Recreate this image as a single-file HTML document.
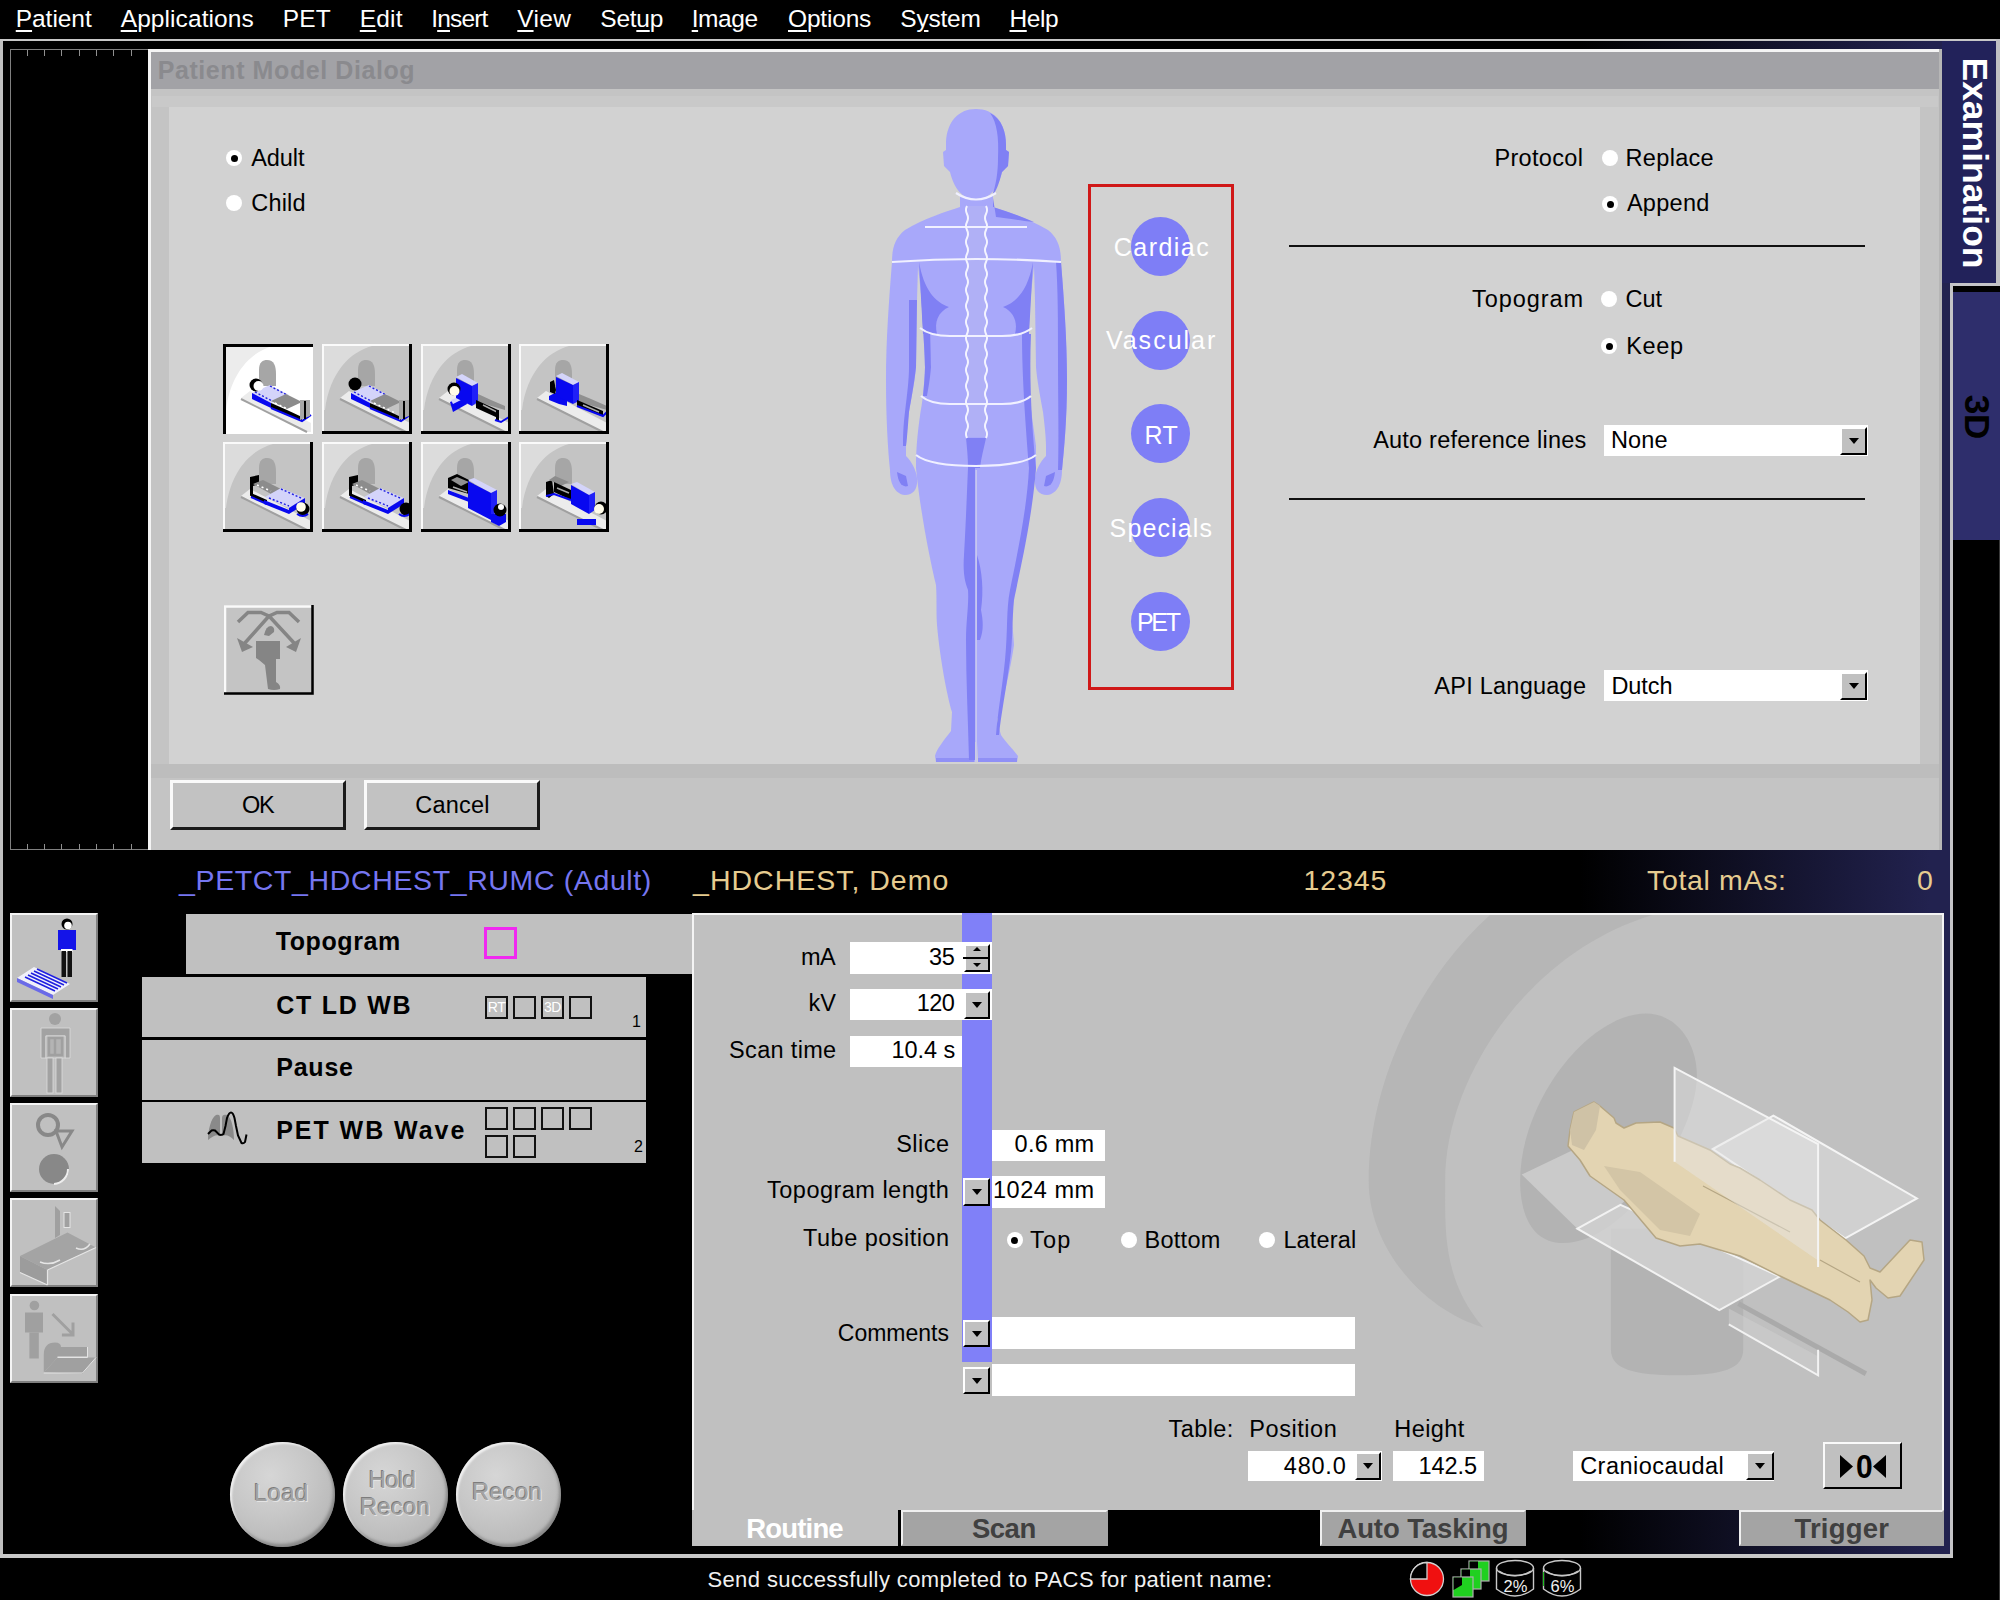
<!DOCTYPE html><html><head><meta charset="utf-8"><style>
html,body{margin:0;padding:0;background:#000;}
body{width:2000px;height:1600px;position:relative;overflow:hidden;font-family:"Liberation Sans", sans-serif;}
u{text-decoration:underline;text-underline-offset:3px;text-decoration-thickness:2px;}
</style></head><body>
<div style="position:absolute;left:0;top:41px;width:1950px;height:1513px;background:linear-gradient(90deg,#000 0,#000 1580px,#22224f 1930px,#22224f 1950px)"></div>
<div style="position:absolute;left:0px;top:39px;width:2000px;height:2px;background:#c8c8c8;"></div>
<div style="position:absolute;left:0px;top:41px;width:3px;height:1517px;background:#c0c0c0;"></div>
<div style="position:absolute;left:15.75px;top:7.26px;font-size:24.5px;line-height:24.5px;letter-spacing:-0.050px;color:#fff;font-weight:normal;white-space:nowrap;"><u>P</u>atient</div>
<div style="position:absolute;left:120.70px;top:7.26px;font-size:24.5px;line-height:24.5px;letter-spacing:0.089px;color:#fff;font-weight:normal;white-space:nowrap;"><u>A</u>pplications</div>
<div style="position:absolute;left:282.80px;top:7.26px;font-size:24.5px;line-height:24.5px;letter-spacing:0.188px;color:#fff;font-weight:normal;white-space:nowrap;">PET</div>
<div style="position:absolute;left:359.80px;top:7.26px;font-size:24.5px;line-height:24.5px;letter-spacing:0.150px;color:#fff;font-weight:normal;white-space:nowrap;"><u>E</u>dit</div>
<div style="position:absolute;left:431.20px;top:7.26px;font-size:24.5px;line-height:24.5px;letter-spacing:-0.830px;color:#fff;font-weight:normal;white-space:nowrap;">I<u>n</u>sert</div>
<div style="position:absolute;left:517.30px;top:7.26px;font-size:24.5px;line-height:24.5px;letter-spacing:0.342px;color:#fff;font-weight:normal;white-space:nowrap;"><u>V</u>iew</div>
<div style="position:absolute;left:600.30px;top:7.26px;font-size:24.5px;line-height:24.5px;letter-spacing:-0.250px;color:#fff;font-weight:normal;white-space:nowrap;">Set<u>u</u>p</div>
<div style="position:absolute;left:691.70px;top:7.26px;font-size:24.5px;line-height:24.5px;letter-spacing:-0.406px;color:#fff;font-weight:normal;white-space:nowrap;"><u>I</u>mage</div>
<div style="position:absolute;left:788.00px;top:7.26px;font-size:24.5px;line-height:24.5px;letter-spacing:-0.179px;color:#fff;font-weight:normal;white-space:nowrap;"><u>O</u>ptions</div>
<div style="position:absolute;left:900.30px;top:7.26px;font-size:24.5px;line-height:24.5px;letter-spacing:-0.225px;color:#fff;font-weight:normal;white-space:nowrap;">S<u>y</u>stem</div>
<div style="position:absolute;left:1009.50px;top:7.26px;font-size:24.5px;line-height:24.5px;letter-spacing:-0.458px;color:#fff;font-weight:normal;white-space:nowrap;"><u>H</u>elp</div>
<div style="position:absolute;left:10px;top:49px;width:140px;height:801px;box-sizing:border-box;border:1px solid #808080;border-right:none;"></div>
<div style="position:absolute;left:27px;top:50px;width:1px;height:6px;background:#909090;"></div>
<div style="position:absolute;left:27px;top:844px;width:1px;height:6px;background:#909090;"></div>
<div style="position:absolute;left:44px;top:50px;width:1px;height:6px;background:#909090;"></div>
<div style="position:absolute;left:44px;top:844px;width:1px;height:6px;background:#909090;"></div>
<div style="position:absolute;left:61px;top:50px;width:1px;height:6px;background:#909090;"></div>
<div style="position:absolute;left:61px;top:844px;width:1px;height:6px;background:#909090;"></div>
<div style="position:absolute;left:79px;top:50px;width:1px;height:6px;background:#909090;"></div>
<div style="position:absolute;left:79px;top:844px;width:1px;height:6px;background:#909090;"></div>
<div style="position:absolute;left:96px;top:50px;width:1px;height:6px;background:#909090;"></div>
<div style="position:absolute;left:96px;top:844px;width:1px;height:6px;background:#909090;"></div>
<div style="position:absolute;left:113px;top:50px;width:1px;height:6px;background:#909090;"></div>
<div style="position:absolute;left:113px;top:844px;width:1px;height:6px;background:#909090;"></div>
<div style="position:absolute;left:131px;top:50px;width:1px;height:6px;background:#909090;"></div>
<div style="position:absolute;left:131px;top:844px;width:1px;height:6px;background:#909090;"></div>
<div style="position:absolute;left:148px;top:49px;width:1794px;height:801px;background:#c4c4c4;"></div>
<div style="position:absolute;left:148px;top:49px;width:1794px;height:3px;background:#f4f4f4;"></div>
<div style="position:absolute;left:148px;top:49px;width:3px;height:801px;background:#f4f4f4;"></div>
<div style="position:absolute;left:1939px;top:49px;width:3px;height:801px;background:#b6b6b6;"></div>
<div style="position:absolute;left:151px;top:52px;width:1788px;height:37px;background:#a2a2a6;"></div>
<div style="position:absolute;left:157.70px;top:58.24px;font-size:25px;line-height:25px;letter-spacing:0.580px;color:#8a8a8e;font-weight:bold;white-space:nowrap;">Patient Model Dialog</div>
<div style="position:absolute;left:151px;top:89px;width:1788px;height:18px;background:#c4c4c4;"></div>
<div style="position:absolute;left:152px;top:96px;width:1786px;height:11px;background:#c9c9c9;"></div>
<div style="position:absolute;left:169px;top:107px;width:1751px;height:657px;background:#d2d2d2;"></div>
<div style="position:absolute;left:151px;top:764px;width:1788px;height:14px;background:#bdbdbd;"></div>
<div style="position:absolute;left:226px;top:150px;width:16px;height:16px;border-radius:50%;background:#fff;"></div>
<div style="position:absolute;left:230.5px;top:154.5px;width:7px;height:7px;border-radius:50%;background:#000;"></div>
<div style="position:absolute;left:251.30px;top:147.11px;font-size:23.5px;line-height:23.5px;letter-spacing:-0.106px;color:#000;font-weight:normal;white-space:nowrap;">Adult</div>
<div style="position:absolute;left:226px;top:195px;width:16px;height:16px;border-radius:50%;background:#fff;"></div>
<div style="position:absolute;left:251.30px;top:192.11px;font-size:23.5px;line-height:23.5px;letter-spacing:0.175px;color:#000;font-weight:normal;white-space:nowrap;">Child</div>
<div style="position:absolute;left:170px;top:780px;width:176px;height:50px;background:#c2c2c2;box-sizing:border-box;border-top:3px solid #fafafa;border-left:3px solid #fafafa;border-bottom:3px solid #1a1a1a;border-right:3px solid #1a1a1a;"></div>
<div style="position:absolute;left:242.00px;top:794.11px;font-size:23.5px;line-height:23.5px;letter-spacing:-1.200px;color:#000;font-weight:normal;white-space:nowrap;">OK</div>
<div style="position:absolute;left:364px;top:780px;width:176px;height:50px;background:#c2c2c2;box-sizing:border-box;border-top:3px solid #fafafa;border-left:3px solid #fafafa;border-bottom:3px solid #1a1a1a;border-right:3px solid #1a1a1a;"></div>
<div style="position:absolute;left:415.20px;top:794.11px;font-size:23.5px;line-height:23.5px;letter-spacing:0.235px;color:#000;font-weight:normal;white-space:nowrap;">Cancel</div>
<div style="position:absolute;left:1494.40px;top:146.61px;font-size:23.5px;line-height:23.5px;letter-spacing:0.336px;color:#000;font-weight:normal;white-space:nowrap;">Protocol</div>
<div style="position:absolute;left:1602px;top:150px;width:16px;height:16px;border-radius:50%;background:#fff;"></div>
<div style="position:absolute;left:1625.60px;top:146.61px;font-size:23.5px;line-height:23.5px;letter-spacing:0.308px;color:#000;font-weight:normal;white-space:nowrap;">Replace</div>
<div style="position:absolute;left:1602px;top:196px;width:16px;height:16px;border-radius:50%;background:#fff;"></div>
<div style="position:absolute;left:1606.5px;top:200.5px;width:7px;height:7px;border-radius:50%;background:#000;"></div>
<div style="position:absolute;left:1626.90px;top:192.11px;font-size:23.5px;line-height:23.5px;letter-spacing:0.300px;color:#000;font-weight:normal;white-space:nowrap;">Append</div>
<div style="position:absolute;left:1289px;top:245px;width:576px;height:2px;background:#111;"></div>
<div style="position:absolute;left:1472.00px;top:287.91px;font-size:23.5px;line-height:23.5px;letter-spacing:0.929px;color:#000;font-weight:normal;white-space:nowrap;">Topogram</div>
<div style="position:absolute;left:1601px;top:291px;width:16px;height:16px;border-radius:50%;background:#fff;"></div>
<div style="position:absolute;left:1625.60px;top:287.91px;font-size:23.5px;line-height:23.5px;letter-spacing:-0.012px;color:#000;font-weight:normal;white-space:nowrap;">Cut</div>
<div style="position:absolute;left:1601px;top:338px;width:16px;height:16px;border-radius:50%;background:#fff;"></div>
<div style="position:absolute;left:1605.5px;top:342.5px;width:7px;height:7px;border-radius:50%;background:#000;"></div>
<div style="position:absolute;left:1626.20px;top:334.71px;font-size:23.5px;line-height:23.5px;letter-spacing:0.708px;color:#000;font-weight:normal;white-space:nowrap;">Keep</div>
<div style="position:absolute;left:1373.20px;top:428.71px;font-size:23.5px;line-height:23.5px;letter-spacing:0.211px;color:#000;font-weight:normal;white-space:nowrap;">Auto reference lines</div>
<div style="position:absolute;left:1604px;top:425px;width:264px;height:31px;background:#fff;"></div>
<div style="position:absolute;left:1611.00px;top:429.11px;font-size:23.5px;line-height:23.5px;letter-spacing:0.125px;color:#000;font-weight:normal;white-space:nowrap;">None</div>
<div style="position:absolute;left:1840px;top:427px;width:27px;height:28px;background:#c0c0c0;box-sizing:border-box;border-top:2px solid #fff;border-left:2px solid #fff;border-bottom:2px solid #000;border-right:2px solid #000;"></div>
<svg style="position:absolute;left:1847.5px;top:437.0px" width="12" height="8"><polygon points="1,1 11,1 6,7" fill="#000"/></svg>
<div style="position:absolute;left:1289px;top:498px;width:576px;height:2px;background:#111;"></div>
<div style="position:absolute;left:1434.30px;top:674.61px;font-size:23.5px;line-height:23.5px;letter-spacing:0.245px;color:#000;font-weight:normal;white-space:nowrap;">API Language</div>
<div style="position:absolute;left:1604px;top:670px;width:264px;height:31px;background:#fff;"></div>
<div style="position:absolute;left:1611.40px;top:674.61px;font-size:23.5px;line-height:23.5px;letter-spacing:-0.069px;color:#000;font-weight:normal;white-space:nowrap;">Dutch</div>
<div style="position:absolute;left:1840px;top:672px;width:27px;height:28px;background:#c0c0c0;box-sizing:border-box;border-top:2px solid #fff;border-left:2px solid #fff;border-bottom:2px solid #000;border-right:2px solid #000;"></div>
<svg style="position:absolute;left:1847.5px;top:682.0px" width="12" height="8"><polygon points="1,1 11,1 6,7" fill="#000"/></svg>
<div style="position:absolute;left:1088px;top:184px;width:146px;height:506px;box-sizing:border-box;border:3px solid #d01818;"></div>
<div style="position:absolute;left:1131.0px;top:217.1px;width:59px;height:59px;border-radius:50%;background:#7e7ef6;"></div>
<div style="position:absolute;left:1113.80px;top:234.74px;font-size:25px;line-height:25px;letter-spacing:1.463px;color:#fff;font-weight:normal;white-space:nowrap;">Cardiac</div>
<div style="position:absolute;left:1131.0px;top:310.5px;width:59px;height:59px;border-radius:50%;background:#7e7ef6;"></div>
<div style="position:absolute;left:1105.90px;top:328.34px;font-size:25px;line-height:25px;letter-spacing:2.004px;color:#fff;font-weight:normal;white-space:nowrap;">Vascular</div>
<div style="position:absolute;left:1131.0px;top:404.2px;width:59px;height:59px;border-radius:50%;background:#7e7ef6;"></div>
<div style="position:absolute;left:1144.60px;top:422.74px;font-size:25px;line-height:25px;letter-spacing:0.425px;color:#fff;font-weight:normal;white-space:nowrap;">RT</div>
<div style="position:absolute;left:1131.0px;top:498.0px;width:59px;height:59px;border-radius:50%;background:#7e7ef6;"></div>
<div style="position:absolute;left:1109.60px;top:516.14px;font-size:25px;line-height:25px;letter-spacing:1.129px;color:#fff;font-weight:normal;white-space:nowrap;">Specials</div>
<div style="position:absolute;left:1131.0px;top:591.5px;width:59px;height:59px;border-radius:50%;background:#7e7ef6;"></div>
<div style="position:absolute;left:1136.90px;top:610.44px;font-size:25px;line-height:25px;letter-spacing:-2.213px;color:#fff;font-weight:normal;white-space:nowrap;">PET</div>
<svg style="position:absolute;left:223px;top:344px" width="90" height="90"><rect x="0" y="0" width="90" height="90" fill="#ffffff"/><path d="M2,2 H50 C28,8 8,28 3,66 L2,66 Z" fill="#ececec"/><path d="M36,42 V26 C36,18 40,16 44,16 C51,16 53,22 53,30 V42 Z" fill="#a6a6a6"/><polygon points="18,54 27,47 88,79 88,88 84,88" fill="#ececec" /><path d="M18,55 L84,88" stroke="#a0a0a0" stroke-width="2"/><polygon points="29,49 47,41 66,51 48,59" fill="#d4d4fa" /><path d="M32,48 L49,57 M47,42 L64,51" stroke="#2020e0" stroke-width="1.4" stroke-dasharray="2,2"/><polygon points="29,49 48,59 48,64 29,55" fill="#0808f0" /><polygon points="48,57 63,50 79,58 64,65" fill="#8c8c8c" /><path d="M52,59 L73,69" stroke="#fff" stroke-width="1.5" stroke-dasharray="2,3"/><polygon points="48,59 64,66 79,73 79,77 48,64" fill="#000" /><path d="M48,64 L79,77 L88,71" stroke="#0808f0" stroke-width="2" fill="none"/><polygon points="77,56 87,56 87,72 77,76" fill="#a8a8a8" /><path d="M82,57 V75" stroke="#000" stroke-width="2"/><circle cx="33" cy="41" r="6.5" fill="#000"/><circle cx="35.5" cy="42" r="5" fill="#fff"/><path d="M1.5,90 V1.5 H90" fill="none" stroke="#000" stroke-width="3"/></svg>
<svg style="position:absolute;left:322px;top:344px" width="90" height="90"><rect x="0" y="0" width="90" height="90" fill="#c4c4c4"/><path d="M2,2 H50 C28,8 8,28 3,66 L2,66 Z" fill="#dcdcdc"/><path d="M36,42 V26 C36,18 40,16 44,16 C51,16 53,22 53,30 V42 Z" fill="#a6a6a6"/><polygon points="18,54 27,47 88,79 88,88 84,88" fill="#ececec" /><path d="M18,55 L84,88" stroke="#a0a0a0" stroke-width="2"/><polygon points="29,49 47,41 66,51 48,59" fill="#d4d4fa" /><path d="M32,48 L49,57 M47,42 L64,51" stroke="#2020e0" stroke-width="1.4" stroke-dasharray="2,2"/><polygon points="29,49 48,59 48,64 29,55" fill="#0808f0" /><polygon points="48,57 63,50 79,58 64,65" fill="#8c8c8c" /><path d="M52,59 L73,69" stroke="#fff" stroke-width="1.5" stroke-dasharray="2,3"/><polygon points="48,59 64,66 79,73 79,77 48,64" fill="#000" /><path d="M48,64 L79,77 L88,71" stroke="#0808f0" stroke-width="2" fill="none"/><polygon points="77,56 87,56 87,72 77,76" fill="#a8a8a8" /><path d="M82,57 V75" stroke="#000" stroke-width="2"/><circle cx="33" cy="40" r="6.5" fill="#000"/><path d="M1,89 V1 H89" fill="none" stroke="#fafafa" stroke-width="2"/><path d="M0,88.5 H88.5 V0" fill="none" stroke="#000" stroke-width="3"/></svg>
<svg style="position:absolute;left:421px;top:344px" width="90" height="90"><rect x="0" y="0" width="90" height="90" fill="#c4c4c4"/><path d="M2,2 H50 C28,8 8,28 3,66 L2,66 Z" fill="#dcdcdc"/><path d="M36,42 V26 C36,18 40,16 44,16 C51,16 53,22 53,30 V42 Z" fill="#a6a6a6"/><polygon points="18,54 27,47 88,79 88,88 84,88" fill="#ececec" /><path d="M18,55 L84,88" stroke="#a0a0a0" stroke-width="2"/><polygon points="29,58 44,52 46,60 32,68" fill="#0808f0" /><polygon points="30,56 42,51 44,54 32,60" fill="#d4d4fa" /><polygon points="35,33 41,30 57,39 51,42" fill="#d4d4fa" /><polygon points="35,34 51,42 51,62 35,54" fill="#0808f0" /><polygon points="51,42 57,39 57,58 51,62" fill="#2020f8" /><polygon points="57,50 70,56 84,62 84,66 57,58" fill="#909090" /><polygon points="55,56 77,66 77,74 55,64" fill="#000" /><path d="M62,61 L76,68" stroke="#aaa" stroke-width="1.5"/><polygon points="75,66 78,66 78,77 75,77" fill="#000" /><path d="M74,76 L80,78 L88,73" stroke="#0808f0" stroke-width="2" fill="none"/><circle cx="33" cy="45" r="6.5" fill="#000"/><circle cx="33.5" cy="47" r="5" fill="#fffbe8"/><path d="M1,89 V1 H89" fill="none" stroke="#fafafa" stroke-width="2"/><path d="M0,88.5 H88.5 V0" fill="none" stroke="#000" stroke-width="3"/></svg>
<svg style="position:absolute;left:519px;top:344px" width="90" height="90"><rect x="0" y="0" width="90" height="90" fill="#c4c4c4"/><path d="M2,2 H50 C28,8 8,28 3,66 L2,66 Z" fill="#dcdcdc"/><path d="M36,42 V26 C36,18 40,16 44,16 C51,16 53,22 53,30 V42 Z" fill="#a6a6a6"/><polygon points="18,54 27,47 88,79 88,88 84,88" fill="#ececec" /><path d="M18,55 L84,88" stroke="#a0a0a0" stroke-width="2"/><polygon points="30,52 38,48 48,54 48,62 40,60 30,56" fill="#0808f0" /><polygon points="37,32 43,29 60,38 54,41" fill="#d4d4fa" /><polygon points="37,33 54,41 54,60 37,52" fill="#0808f0" /><polygon points="54,41 60,38 60,57 54,60" fill="#2020f8" /><polygon points="60,50 72,55 88,62 88,66 60,58" fill="#909090" /><polygon points="58,56 84,67 84,72 58,62" fill="#000" /><path d="M64,61 L80,68" stroke="#aaa" stroke-width="1.5"/><path d="M58,62 L84,72 L88,68" stroke="#0808f0" stroke-width="2" fill="none"/><path d="M31,38 L35,36 L37,46 L36,50 L31,48 Z" fill="#000"/><path d="M1,89 V1 H89" fill="none" stroke="#fafafa" stroke-width="2"/><path d="M0,88.5 H88.5 V0" fill="none" stroke="#000" stroke-width="3"/></svg>
<svg style="position:absolute;left:223px;top:442px" width="90" height="90"><rect x="0" y="0" width="90" height="90" fill="#c4c4c4"/><path d="M2,2 H50 C28,8 8,28 3,66 L2,66 Z" fill="#dcdcdc"/><path d="M36,42 V26 C36,18 40,16 44,16 C51,16 53,22 53,30 V42 Z" fill="#a6a6a6"/><polygon points="18,54 27,47 88,79 88,88 84,88" fill="#ececec" /><path d="M18,55 L84,88" stroke="#a0a0a0" stroke-width="2"/><polygon points="27,35 36,33 36,42 30,44 30,53 27,54" fill="#000" /><polygon points="30,42 40,38 58,47 48,52" fill="#8c8c8c" /><path d="M34,43 L48,49" stroke="#fff" stroke-width="1.5" stroke-dasharray="2,3"/><polygon points="28,51 44,58 44,62 28,55" fill="#000" /><path d="M28,55 L44,62" stroke="#0808f0" stroke-width="2"/><polygon points="42,55 58,46 82,56 66,66" fill="#d4d4fa" /><path d="M46,56 L66,64 M58,47 L78,56" stroke="#2020e0" stroke-width="1.4" stroke-dasharray="2,2"/><polygon points="41,58 66,68 66,72 41,62" fill="#0808f0" /><polygon points="66,66 82,56 82,62 66,72" fill="#0808f0" /><circle cx="80" cy="67" r="6.5" fill="#000"/><circle cx="78" cy="65" r="4.8" fill="#fffbe8"/><path d="M74,72 Q80,76 85,72" stroke="#0808f0" stroke-width="2" fill="none"/><path d="M1,89 V1 H89" fill="none" stroke="#fafafa" stroke-width="2"/><path d="M0,88.5 H88.5 V0" fill="none" stroke="#000" stroke-width="3"/></svg>
<svg style="position:absolute;left:322px;top:442px" width="90" height="90"><rect x="0" y="0" width="90" height="90" fill="#c4c4c4"/><path d="M2,2 H50 C28,8 8,28 3,66 L2,66 Z" fill="#dcdcdc"/><path d="M36,42 V26 C36,18 40,16 44,16 C51,16 53,22 53,30 V42 Z" fill="#a6a6a6"/><polygon points="18,54 27,47 88,79 88,88 84,88" fill="#ececec" /><path d="M18,55 L84,88" stroke="#a0a0a0" stroke-width="2"/><polygon points="27,35 36,33 36,42 30,44 30,53 27,54" fill="#000" /><polygon points="30,42 40,38 58,47 48,52" fill="#8c8c8c" /><path d="M34,43 L48,49" stroke="#fff" stroke-width="1.5" stroke-dasharray="2,3"/><polygon points="28,51 44,58 44,62 28,55" fill="#000" /><path d="M28,55 L44,62" stroke="#0808f0" stroke-width="2"/><polygon points="42,55 58,46 82,56 66,66" fill="#d4d4fa" /><path d="M46,56 L66,64 M58,47 L78,56" stroke="#2020e0" stroke-width="1.4" stroke-dasharray="2,2"/><polygon points="41,58 66,68 66,72 41,62" fill="#0808f0" /><polygon points="66,66 82,56 82,62 66,72" fill="#0808f0" /><circle cx="84" cy="67" r="6.5" fill="#000"/><path d="M77,72 Q82,76 88,72" stroke="#0808f0" stroke-width="2" fill="none"/><path d="M1,89 V1 H89" fill="none" stroke="#fafafa" stroke-width="2"/><path d="M0,88.5 H88.5 V0" fill="none" stroke="#000" stroke-width="3"/></svg>
<svg style="position:absolute;left:421px;top:442px" width="90" height="90"><rect x="0" y="0" width="90" height="90" fill="#c4c4c4"/><path d="M2,2 H50 C28,8 8,28 3,66 L2,66 Z" fill="#dcdcdc"/><path d="M36,42 V26 C36,18 40,16 44,16 C51,16 53,22 53,30 V42 Z" fill="#a6a6a6"/><polygon points="18,54 27,47 88,79 88,88 84,88" fill="#ececec" /><path d="M18,55 L84,88" stroke="#a0a0a0" stroke-width="2"/><polygon points="27,36 36,32 48,38 48,52 27,46" fill="#000" /><polygon points="30,38 36,35 48,40 40,44" fill="#909090" /><path d="M32,45 L46,50" stroke="#aaa" stroke-width="1.5"/><polygon points="27,48 48,56 48,60 27,52" fill="#0808f0" /><polygon points="47,38 53,36 76,48 70,51" fill="#d4d4fa" /><polygon points="47,39 70,51 70,78 47,66" fill="#0808f0" /><polygon points="70,51 76,48 76,70 70,74" fill="#2020f8" /><polygon points="70,72 85,72 85,80 78,84 70,80" fill="#0808f0" /><circle cx="79" cy="68" r="6.5" fill="#000"/><circle cx="80" cy="65" r="3" fill="#fff"/><path d="M1,89 V1 H89" fill="none" stroke="#fafafa" stroke-width="2"/><path d="M0,88.5 H88.5 V0" fill="none" stroke="#000" stroke-width="3"/></svg>
<svg style="position:absolute;left:519px;top:442px" width="90" height="90"><rect x="0" y="0" width="90" height="90" fill="#c4c4c4"/><path d="M2,2 H50 C28,8 8,28 3,66 L2,66 Z" fill="#dcdcdc"/><path d="M36,42 V26 C36,18 40,16 44,16 C51,16 53,22 53,30 V42 Z" fill="#a6a6a6"/><polygon points="18,54 27,47 88,79 88,88 84,88" fill="#ececec" /><path d="M18,55 L84,88" stroke="#a0a0a0" stroke-width="2"/><polygon points="27,40 33,38 35,52 30,56 27,54" fill="#000" /><polygon points="30,38 36,34 50,40 42,44" fill="#8c8c8c" /><polygon points="35,40 52,48 52,58 35,50" fill="#000" /><path d="M38,46 L50,51" stroke="#aaa" stroke-width="1.5"/><path d="M27,54 L35,52 L52,58" stroke="#0808f0" stroke-width="2" fill="none"/><polygon points="52,42 58,40 76,50 70,53" fill="#d4d4fa" /><polygon points="52,43 70,53 70,72 52,62" fill="#0808f0" /><polygon points="70,53 76,50 76,68 70,72" fill="#2020f8" /><rect x="58" y="77" width="19" height="6" fill="#0808f0"/><circle cx="82" cy="66" r="6.5" fill="#000"/><circle cx="80" cy="67" r="5" fill="#fffbe8"/><path d="M1,89 V1 H89" fill="none" stroke="#fafafa" stroke-width="2"/><path d="M0,88.5 H88.5 V0" fill="none" stroke="#000" stroke-width="3"/></svg>
<svg style="position:absolute;left:224px;top:605px" width="90" height="90"><rect width="90" height="90" fill="#c4c4c4"/><path d="M1,89 V1.5 H89" fill="none" stroke="#fafafa" stroke-width="2.5"/><path d="M0,88.5 H88.5 V0" fill="none" stroke="#000" stroke-width="2.5"/><path d="M14,17 L24,7.5 L37,7.5 L45,11 L53,7.5 L65,7.5 L75,17" fill="none" stroke="#858585" stroke-width="3.5"/><path d="M45,11 L20,39 M45,11 L71,39" fill="none" stroke="#858585" stroke-width="3.5"/><polygon points="13,33 18,47 29,42" fill="#858585"/><polygon points="77,33 72,47 62,42" fill="#858585"/><path d="M40,30 Q42,21 47,21 Q51,22 50,27 L45,31 Z" fill="#858585"/><path d="M32,36 H56 V54 H52 V77 Q57,80 56,84 Q50,86 44,84 L41,60 L35,55 L32,53 Z" fill="#858585"/></svg>
<svg style="position:absolute;left:0px;top:0px" width="2000" height="1600"><path fill="#a8a8fa" d="
M960,196 L960,207 C945,212 925,218 905,230 C895,238 892,248 892,262
C889,300 886,340 886,380 C886,420 888,450 890,470 C890,482 894,494 905,495 C914,495 918,488 917,478
C916,470 912,462 906,456 L906,446 C907,430 908,418 909,412 C912,395 915,380 916,367 L917,300 L918,266 L921.6,300 C923,330 925,355 925,367 C924,390 922,405 920.5,412 C918,430 916,446 916,468
C920,510 930,560 936,585 C937,600 936,610 937,625 C940,660 948,700 952,712 L951,731 C944,740 936,750 935,756 L936,762 L975,762 L975,742 L977,742 L978,762
L1017,762 L1018,756 C1012,748 1004,740 1001,735 L997,721 C1004,700 1012,660 1014,645 C1013,625 1010,612 1011,600 C1016,570 1030,510 1036,468
C1036,455 1036,446 1036,446 C1034,430 1032,418 1031.5,412 C1030,405 1027,390 1027,367 C1027,355 1029,330 1030.4,300 L1034,266 L1035,300 L1036,367 C1037,380 1040,395 1043,412 C1044,420 1046,436 1046,446 L1046,456 C1040,462 1036,470 1035,478 C1034,488 1038,495 1047,495 C1058,494 1062,482 1062,470
C1064,450 1067,420 1067,380 C1067,340 1064,300 1061,262 C1061,248 1058,238 1048,230
C1028,218 1008,212 993,207 L993,196 Z"/><path fill="#a8a8fa" d="M976,109 C994,109 1005,122 1006,142 L1006,150 L1009,152 L1008,166 L1002,172 C998,188 990,199 976,200 C962,199 954,188 950,172 L944,166 L943,152 L946,150 L946,142 C947,122 958,109 976,109 Z"/><path fill="#8080f4" d="M990,113 C1002,119 1006,132 1006,145 L1006,150 L1009,152 L1008,166 L1002,172 C999,184 996,192 992,196 C996,185 998,172 998,158 C999,138 997,122 990,113 Z"/><path fill="#8080f4" d="M993,198 L993,207 C1006,211 1020,216 1034,222 C1018,220 1004,218 996,217 Z"/><path fill="#8080f4" d="M919,262 L923,334 L937,334 C934,322 938,312 949,307 C935,302 924,290 919,262 Z"/><path fill="#8080f4" d="M1033,262 L1029,334 L1015,334 C1018,322 1014,312 1003,307 C1017,302 1028,290 1033,262 Z"/><path fill="#8080f4" d="M921.6,300 L929.5,300 C930,330 931,355 931,367 C930,380 928,390 927,396 L923,396 C924,385 925,375 925,367 C925,355 923,330 921.6,300 Z"/><path fill="#8080f4" d="M1022,334 L1031,334 C1029,380 1032,430 1036,468 C1032,520 1020,570 1014,600 C1012,620 1013,640 1010,660 C1006,690 1001,715 999,735 L996,735 C998,710 1002,690 1005,660 C1008,630 1006,610 1010,590 C1016,560 1027,510 1029,468 C1026,430 1022,380 1022,334 Z"/><path fill="#8080f4" d="M1056,262 L1061,262 C1064,300 1067,340 1067,380 C1067,420 1064,450 1062,470 L1058,470 C1059,440 1058,400 1058,360 C1058,320 1058,290 1056,262 Z"/><path fill="#8080f4" d="M909,300 L917,300 L916,367 C914,385 911,400 909,412 C908,425 907,438 906,446 L903,446 C903,430 904,420 905,412 C907,395 909,380 909,367 Z"/><path fill="#8080f4" d="M966,438 L986,438 C984,448 981,458 980,468 L975,468 L975,760 L969,760 C968,720 966,680 966,640 C966,620 969,605 968,590 C964,580 963,570 964,555 C966,520 967,490 968,468 C968,458 967,448 966,438 Z"/><path fill="#8080f4" d="M977,555 C982,570 984,590 981,610 C983,620 984,630 980,640 L977,640 Z"/><path d="M976.2,470 L976.2,762" stroke="#c6c6ee" stroke-width="1.6"/><path fill="#8080f4" d="M897,472 C898,482 902,488 908,486 L906,476 Z"/><path fill="#8080f4" d="M1055,472 C1054,482 1050,488 1044,486 L1046,476 Z"/><path fill="#8080f4" d="M936,758 L974,758 L974,762 L936,762 Z M978,758 L1017,758 L1017,762 L978,762 Z" opacity="0.6"/><path fill="#b0b0f6" d="M968,206 L985,206 L985,437 L968,437 Z"/><path stroke="#f0f0ff" stroke-width="2.2" fill="none" d="M925,227 L1027,227"/><path stroke="#f0f0ff" stroke-width="2.2" fill="none" d="M892,262 Q976,256 1061,262"/><path stroke="#f0f0ff" stroke-width="2.2" fill="none" d="M920,328 Q930,336 950,336 L1002,336 Q1022,336 1032,328"/><path stroke="#f0f0ff" stroke-width="2.2" fill="none" d="M921,396 Q930,404 950,404 L1002,404 Q1022,404 1031,396"/><path stroke="#f0f0ff" stroke-width="2.2" fill="none" d="M916,455 Q930,466 976,466 Q1022,466 1036,455"/><path stroke="#f0f0ff" stroke-width="2.2" fill="none" d="M956,193 Q976,206 996,193"/><path stroke="#f4f4ff" stroke-width="2" fill="none" d="M967,206 Q965,210 967,214 Q969,218 967,222 Q965,226 967,230 Q969,234 967,238 Q965,242 967,246 Q969,250 967,254 Q965,258 967,262 Q969,266 967,270 Q965,274 967,278 Q969,282 967,286 Q965,290 967,294 Q969,298 967,302 Q965,306 967,310 Q969,314 967,318 Q965,322 967,326 Q969,330 967,334 Q965,338 967,342 Q969,346 967,350 Q965,354 967,358 Q969,362 967,366 Q965,370 967,374 Q969,378 967,382 Q965,386 967,390 Q969,394 967,398 Q965,402 967,406 Q969,410 967,414 Q965,418 967,422 Q969,426 967,430 Q965,434 967,438"/><path stroke="#f4f4ff" stroke-width="2" fill="none" d="M986,206 Q988,210 986,214 Q984,218 986,222 Q988,226 986,230 Q984,234 986,238 Q988,242 986,246 Q984,250 986,254 Q988,258 986,262 Q984,266 986,270 Q988,274 986,278 Q984,282 986,286 Q988,290 986,294 Q984,298 986,302 Q988,306 986,310 Q984,314 986,318 Q988,322 986,326 Q984,330 986,334 Q988,338 986,342 Q984,346 986,350 Q988,354 986,358 Q984,362 986,366 Q988,370 986,374 Q984,378 986,382 Q988,386 986,390 Q984,394 986,398 Q988,402 986,406 Q984,410 986,414 Q988,418 986,422 Q984,426 986,430 Q988,434 986,438"/></svg>
<div style="position:absolute;left:179.10px;top:866.18px;font-size:28.5px;line-height:28.5px;letter-spacing:0.622px;color:#7676f0;font-weight:normal;white-space:nowrap;">_PETCT_HDCHEST_RUMC (Adult)</div>
<div style="position:absolute;left:693.10px;top:866.18px;font-size:28.5px;line-height:28.5px;letter-spacing:0.988px;color:#e6cc90;font-weight:normal;white-space:nowrap;">_HDCHEST, Demo</div>
<div style="position:absolute;left:1303.50px;top:866.18px;font-size:28.5px;line-height:28.5px;letter-spacing:0.887px;color:#e6cc90;font-weight:normal;white-space:nowrap;">12345</div>
<div style="position:absolute;left:1647.00px;top:866.18px;font-size:28.5px;line-height:28.5px;letter-spacing:0.667px;color:#e6cc90;font-weight:normal;white-space:nowrap;">Total mAs:</div>
<div style="position:absolute;left:1917.00px;top:866.18px;font-size:28.5px;line-height:28.5px;letter-spacing:0.000px;color:#e6cc90;font-weight:normal;white-space:nowrap;">0</div>
<div style="position:absolute;left:1950px;top:283px;width:3px;height:1275px;background:#c4c4c8;"></div>
<div style="position:absolute;left:1999px;top:540px;width:1px;height:1060px;background:#3a3a3a;"></div>
<div style="position:absolute;left:10px;top:913px;width:88px;height:89px;background:#c0c0c0;box-sizing:border-box;border-top:2px solid #f4f4f4;border-left:2px solid #f4f4f4;border-bottom:2px solid #808080;border-right:2px solid #808080;"></div>
<div style="position:absolute;left:10px;top:1008px;width:88px;height:89px;background:#c0c0c0;box-sizing:border-box;border-top:2px solid #f4f4f4;border-left:2px solid #f4f4f4;border-bottom:2px solid #808080;border-right:2px solid #808080;"></div>
<div style="position:absolute;left:10px;top:1103px;width:88px;height:89px;background:#c0c0c0;box-sizing:border-box;border-top:2px solid #f4f4f4;border-left:2px solid #f4f4f4;border-bottom:2px solid #808080;border-right:2px solid #808080;"></div>
<div style="position:absolute;left:10px;top:1198px;width:88px;height:89px;background:#c0c0c0;box-sizing:border-box;border-top:2px solid #f4f4f4;border-left:2px solid #f4f4f4;border-bottom:2px solid #808080;border-right:2px solid #808080;"></div>
<div style="position:absolute;left:10px;top:1294px;width:88px;height:89px;background:#c0c0c0;box-sizing:border-box;border-top:2px solid #f4f4f4;border-left:2px solid #f4f4f4;border-bottom:2px solid #808080;border-right:2px solid #808080;"></div>
<svg style="position:absolute;left:10px;top:913px" width="88" height="89"><circle cx="57" cy="11" r="5.5" fill="#000"/><circle cx="58" cy="12.5" r="3.8" fill="#fff"/><path d="M48,17 H66 V37 H63 V25 H51 V37 H48 Z" fill="#1414e8"/><rect x="51" y="17" width="12" height="20" fill="#1414e8"/><rect x="51" y="36" width="11.5" height="3" fill="#fff"/><rect x="51.5" y="38" width="4.5" height="26" fill="#111"/><rect x="57.5" y="38" width="4.5" height="26" fill="#111"/><polygon points="7,65 24,54 60,71 43,82" fill="#f0f0fa"/><polygon points="7,65 43,82 43,86 7,69" fill="#6a6ae8"/><path d="M15,64 L45,78 M18,62 L48,76 M21,60 L51,74 M24,58 L54,72 M27,56 L57,70" stroke="#2020e0" stroke-width="1.6"/></svg>
<svg style="position:absolute;left:10px;top:1008px" width="88" height="89"><circle cx="45" cy="11" r="6" fill="#a2a2a2"/><path d="M31,20 H60 V50 H55 V28 H36 V50 H31 Z" fill="#a2a2a2" stroke="#dcdcdc" stroke-width="0.8"/><rect x="36" y="28" width="19" height="22" fill="#b4b4b4" stroke="#dcdcdc" stroke-width="0.8"/><path d="M39,30 H52 V47 H39 Z M45,30 V47" fill="none" stroke="#a0a0a0" stroke-width="2.5"/><rect x="37" y="50" width="6" height="35" fill="#a2a2a2" stroke="#dcdcdc" stroke-width="0.8"/><rect x="46" y="50" width="6" height="35" fill="#a2a2a2" stroke="#dcdcdc" stroke-width="0.8"/></svg>
<svg style="position:absolute;left:10px;top:1103px" width="88" height="89"><circle cx="38" cy="22" r="10" fill="none" stroke="#888" stroke-width="4"/><path d="M46,28 L62,28 L52,44 Z" fill="none" stroke="#888" stroke-width="3"/><circle cx="44" cy="66" r="15" fill="#888"/><path d="M58,66 A15,15 0 0 1 44,81" stroke="#eee" stroke-width="2" fill="none"/></svg>
<svg style="position:absolute;left:10px;top:1198px" width="88" height="89"><path d="M45,8 L50,13 V37 L45,40 Z" fill="#a0a0a0"/><rect x="54" y="14.5" width="6" height="15" fill="#a0a0a0" stroke="#e4e4e4" stroke-width="1"/><polygon points="10,58 57.5,34.5 86,49.5 37.5,72" fill="#a4a4a4"/><polygon points="10,58 37.5,72 37.5,87 10,74.5" fill="#9c9c9c"/><path d="M37.5,72 L86,49.5 M37.5,72 V87 M10,74.5 L37.5,87" stroke="#e6e6e6" stroke-width="1.2" fill="none"/><path d="M30,64 Q40,68 50,62 M66,50 Q74,54 80,46" stroke="#e6e6e6" stroke-width="1.5" fill="none"/></svg>
<svg style="position:absolute;left:10px;top:1294px" width="88" height="89"><circle cx="24.4" cy="11.5" r="4.8" fill="#a0a0a0"/><rect x="15" y="18.5" width="18" height="20" fill="#a0a0a0"/><rect x="19.4" y="38.5" width="9.4" height="26" fill="#a0a0a0"/><path d="M42.5,20 L62,39.5 M63,28.5 V41 H51.9" stroke="#a0a0a0" stroke-width="3" fill="none"/><path d="M33.75,61 Q33.75,48.5 45,48.5 Q51,48.5 51,53 H77.5 V62 H47.5 L47.5,63.5 L33.75,78.5 Z" fill="#a0a0a0"/><polygon points="33.75,78.5 47.5,63.5 86,63.5 72.5,79.75" fill="#a0a0a0"/><path d="M47.5,63.5 H77.5 V53 M33.75,79 H72.5 L86,63.5" stroke="#e4e4e4" stroke-width="1" fill="none"/></svg>
<div style="position:absolute;left:186px;top:914px;width:506px;height:60px;background:#c0c0c0;"></div>
<div style="position:absolute;left:275.70px;top:928.84px;font-size:25px;line-height:25px;letter-spacing:0.589px;color:#000;font-weight:bold;white-space:nowrap;">Topogram</div>
<div style="position:absolute;left:484px;top:927px;width:33px;height:32px;box-sizing:border-box;border:3px solid #f028f0;"></div>
<div style="position:absolute;left:142px;top:977px;width:504px;height:60px;background:#c0c0c0;"></div>
<div style="position:absolute;left:276.20px;top:992.54px;font-size:25px;line-height:25px;letter-spacing:1.750px;color:#000;font-weight:bold;white-space:nowrap;">CT LD WB</div>
<div style="position:absolute;left:142px;top:1040px;width:504px;height:60px;background:#c0c0c0;"></div>
<div style="position:absolute;left:276.20px;top:1054.84px;font-size:25px;line-height:25px;letter-spacing:0.794px;color:#000;font-weight:bold;white-space:nowrap;">Pause</div>
<div style="position:absolute;left:142px;top:1102px;width:504px;height:61px;background:#c0c0c0;"></div>
<div style="position:absolute;left:276.20px;top:1117.84px;font-size:25px;line-height:25px;letter-spacing:1.960px;color:#000;font-weight:bold;white-space:nowrap;">PET WB Wave</div>
<div style="position:absolute;left:485px;top:996px;width:23px;height:23px;box-sizing:border-box;border:2px solid #111;color:#fff;font-size:14px;line-height:19px;text-align:center;letter-spacing:-0.5px;">RT</div>
<div style="position:absolute;left:513px;top:996px;width:23px;height:23px;box-sizing:border-box;border:2px solid #111;"></div>
<div style="position:absolute;left:541px;top:996px;width:23px;height:23px;box-sizing:border-box;border:2px solid #111;color:#fff;font-size:14px;line-height:19px;text-align:center;letter-spacing:-0.5px;">3D</div>
<div style="position:absolute;left:569px;top:996px;width:23px;height:23px;box-sizing:border-box;border:2px solid #111;"></div>
<div style="position:absolute;right:1359px;top:1014.46px;font-size:16px;line-height:16px;color:#000;font-weight:normal;white-space:nowrap;">1</div>
<div style="position:absolute;left:485px;top:1107px;width:23px;height:23px;box-sizing:border-box;border:2px solid #111;"></div>
<div style="position:absolute;left:513px;top:1107px;width:23px;height:23px;box-sizing:border-box;border:2px solid #111;"></div>
<div style="position:absolute;left:541px;top:1107px;width:23px;height:23px;box-sizing:border-box;border:2px solid #111;"></div>
<div style="position:absolute;left:569px;top:1107px;width:23px;height:23px;box-sizing:border-box;border:2px solid #111;"></div>
<div style="position:absolute;left:485px;top:1135px;width:23px;height:23px;box-sizing:border-box;border:2px solid #111;"></div>
<div style="position:absolute;left:513px;top:1135px;width:23px;height:23px;box-sizing:border-box;border:2px solid #111;"></div>
<div style="position:absolute;right:1357px;top:1139.46px;font-size:16px;line-height:16px;color:#000;font-weight:normal;white-space:nowrap;">2</div>
<svg style="position:absolute;left:195px;top:1100px" width="70" height="60"><path d="M13,40 C13,30 16,18 21,15 C24,14 25,15 25,18 L25,36 C22,34 18,36 13,40 Z" fill="#8a8a8a"/><path d="M27,18 C27,15 29,14 32,15 C37,18 39,30 39,40 C35,36 31,34 27,36 Z" fill="#8a8a8a"/><path d="M13,34 L16.5,30.5 Q18,30 20,30.5 L24,34.5 Q26.5,35.5 28.5,34 L30.5,26 L32,18 Q34,12.5 36,12.5 Q38,12.5 39.5,18 L41,26 L43,35.5 L46.5,43 Q48.5,44 50,42 L51.5,34.5" fill="none" stroke="#000" stroke-width="2"/></svg>
<div style="position:absolute;left:692px;top:913px;width:1252px;height:597px;background:#c0c0c0;"></div>
<div style="position:absolute;left:692px;top:913px;width:1252px;height:2px;background:#f4f4f4;"></div>
<div style="position:absolute;left:692px;top:913px;width:2px;height:633px;background:#f4f4f4;"></div>
<div style="position:absolute;left:1942px;top:913px;width:2px;height:633px;background:#f4f4f4;"></div>
<svg style="position:absolute;left:0px;top:0px" width="2000" height="1600"><defs><clipPath id="pc"><rect x="694" y="915" width="1249" height="595"/></clipPath></defs><g clip-path="url(#pc)"><path fill="#b6b6b6" d="M1499.4,906.8 C1419.7,973.7 1368.7,1082.1 1368.7,1180.9 C1368.7,1244.6 1419.7,1308.4 1483.4,1327.5 C1442.0,1279.7 1445.2,1228.7 1445.2,1180.9 C1445.2,1075.7 1531.2,948.2 1658.7,913.2 C1610.9,903.6 1547.2,902.0 1499.4,906.8 Z"/><path fill="#b3b3b3" d="M1646.0,1013.6 C1677.8,1013.6 1696.9,1043.9 1696.9,1075.7 C1696.9,1133.1 1626.8,1243.0 1563.1,1243.0 C1531.2,1243.0 1520.1,1212.8 1520.1,1180.9 C1520.1,1101.2 1588.6,1013.6 1646.0,1013.6 Z"/><path fill="#b3b3b3" d="M1610.9,1228.7 L1743.2,1228.7 L1743.2,1349.8 C1743.2,1368.9 1722.4,1375.3 1677.8,1375.3 C1633.2,1375.3 1610.9,1368.9 1610.9,1349.8 Z"/><polygon fill="#cacaca" points="1521.7,1174.5 1595.0,1139.5 1658.7,1171.3 1620.5,1204.8 1577.4,1228.7"/><path d="M1738.4,1303.6 L1865.9,1373.7" stroke="#aaaaaa" stroke-width="5" fill="none"/><polygon fill="#d6d6d6" fill-opacity="0.75" stroke="#f2f2f2" stroke-width="2" points="1577.4,1228.7 1620.5,1204.8 1779.8,1276.5 1719.3,1310.0"/><polygon fill="#d0d0d0" fill-opacity="0.5" points="1728.8,1308.4 1818.1,1356.2 1818.1,1375.3 1728.8,1324.3"/><path d="M1728.8,1324.3 L1818.1,1375.3 L1818.1,1349.8" stroke="#f2f2f2" stroke-width="2" fill="none"/><polygon fill="#e4e4e4" fill-opacity="0.45" stroke="#f4f4f4" stroke-width="2" points="1712.9,1149.0 1773.4,1115.6 1916.9,1198.4 1845.1,1238.3"/><polygon fill="#e3d4b2" stroke="#b5a684" stroke-width="1.5" stroke-linejoin="round" points="1570,1130 1574,1112 1594,1102 1600,1106 1614,1118 1616,1123 1624,1128 1636,1123 1660,1122 1674,1128 1678,1136 1710,1150 1730,1164 1740,1168 1760,1180 1790,1200 1812,1210 1820,1220 1846,1240 1864,1256 1870,1268 1880,1272 1910,1240 1922,1242 1924,1260 1900,1296 1888,1298 1876,1288 1870,1280 1872,1300 1868,1320 1860,1322 1848,1312 1830,1300 1780,1276 1740,1256 1700,1244 1680,1246 1656,1238 1624,1200 1590,1176 1580,1160 1568,1146"/><polygon fill="#d3c5a6" points="1604,1166 1640,1172 1700,1214 1690,1236 1660,1230 1620,1190"/><polygon fill="#cfc2a6" points="1570,1130 1574,1112 1594,1102 1600,1106 1596,1130 1584,1150 1572,1145"/><path d="M1703,1186 L1790,1232 M1820,1260 L1860,1282" stroke="#b5a684" stroke-width="1.2" fill="none"/><polygon fill="#e6e6e6" fill-opacity="0.45" points="1674.6,1067.8 1818.1,1144.2 1818.1,1260.6 1674.6,1161.8"/><path d="M1674.6,1161.8 L1674.6,1067.8 L1818.1,1144.2 L1818.1,1266.9" stroke="#f4f4f4" stroke-width="2" fill="none"/></g></svg>
<div style="position:absolute;left:962px;top:913px;width:30px;height:449px;background:#8080f8;"></div>
<div style="position:absolute;left:800.90px;top:945.61px;font-size:23.5px;line-height:23.5px;letter-spacing:-0.375px;color:#000;font-weight:normal;white-space:nowrap;">mA</div>
<div style="position:absolute;left:850px;top:942px;width:142px;height:32px;background:#fff;"></div>
<div style="position:absolute;left:928.90px;top:945.61px;font-size:23.5px;line-height:23.5px;letter-spacing:-0.125px;color:#000;font-weight:normal;white-space:nowrap;">35</div>
<div style="position:absolute;left:964px;top:944px;width:26px;height:28px;background:#c0c0c0;box-sizing:border-box;border-top:2px solid #fff;border-left:2px solid #fff;border-bottom:2px solid #000;border-right:2px solid #000;"></div>
<div style="position:absolute;left:963px;top:956.5px;width:25px;height:2px;background:#000;"></div>
<svg style="position:absolute;left:973px;top:947px" width="8" height="20"><polygon points="0,4 8,4 4,0" fill="#000"/><polygon points="0,16 8,16 4,20" fill="#000"/></svg>
<div style="position:absolute;left:808.50px;top:992.11px;font-size:23.5px;line-height:23.5px;letter-spacing:0.025px;color:#000;font-weight:normal;white-space:nowrap;">kV</div>
<div style="position:absolute;left:850px;top:989px;width:142px;height:31px;background:#fff;"></div>
<div style="position:absolute;left:916.70px;top:992.11px;font-size:23.5px;line-height:23.5px;letter-spacing:-0.525px;color:#000;font-weight:normal;white-space:nowrap;">120</div>
<div style="position:absolute;left:964px;top:991px;width:26px;height:28px;background:#c0c0c0;box-sizing:border-box;border-top:2px solid #fff;border-left:2px solid #fff;border-bottom:2px solid #000;border-right:2px solid #000;"></div>
<svg style="position:absolute;left:971.0px;top:1001.0px" width="12" height="8"><polygon points="1,1 11,1 6,7" fill="#000"/></svg>
<div style="position:absolute;left:729.10px;top:1039.01px;font-size:23.5px;line-height:23.5px;letter-spacing:0.325px;color:#000;font-weight:normal;white-space:nowrap;">Scan time</div>
<div style="position:absolute;left:850px;top:1036px;width:112px;height:31px;background:#fff;"></div>
<div style="position:absolute;left:891.50px;top:1039.01px;font-size:23.5px;line-height:23.5px;letter-spacing:-0.060px;color:#000;font-weight:normal;white-space:nowrap;">10.4 s</div>
<div style="position:absolute;left:896.20px;top:1132.91px;font-size:23.5px;line-height:23.5px;letter-spacing:0.456px;color:#000;font-weight:normal;white-space:nowrap;">Slice</div>
<div style="position:absolute;left:992px;top:1130px;width:113px;height:31px;background:#fff;"></div>
<div style="position:absolute;left:1014.60px;top:1132.91px;font-size:23.5px;line-height:23.5px;letter-spacing:0.225px;color:#000;font-weight:normal;white-space:nowrap;">0.6 mm</div>
<div style="position:absolute;left:767.10px;top:1179.31px;font-size:23.5px;line-height:23.5px;letter-spacing:0.477px;color:#000;font-weight:normal;white-space:nowrap;">Topogram length</div>
<div style="position:absolute;left:963px;top:1178px;width:27px;height:28px;background:#c0c0c0;box-sizing:border-box;border-top:2px solid #fff;border-left:2px solid #fff;border-bottom:2px solid #000;border-right:2px solid #000;"></div>
<svg style="position:absolute;left:970.5px;top:1188.0px" width="12" height="8"><polygon points="1,1 11,1 6,7" fill="#000"/></svg>
<div style="position:absolute;left:992px;top:1176px;width:113px;height:32px;background:#fff;"></div>
<div style="position:absolute;left:993.00px;top:1179.31px;font-size:23.5px;line-height:23.5px;letter-spacing:0.517px;color:#000;font-weight:normal;white-space:nowrap;">1024 mm</div>
<div style="position:absolute;left:803.10px;top:1226.61px;font-size:23.5px;line-height:23.5px;letter-spacing:0.471px;color:#000;font-weight:normal;white-space:nowrap;">Tube position</div>
<div style="position:absolute;left:1006.6px;top:1232px;width:16px;height:16px;border-radius:50%;background:#fff;"></div>
<div style="position:absolute;left:1011.1px;top:1236.5px;width:7px;height:7px;border-radius:50%;background:#000;"></div>
<div style="position:absolute;left:1029.90px;top:1228.61px;font-size:23.5px;line-height:23.5px;letter-spacing:1.312px;color:#000;font-weight:normal;white-space:nowrap;">Top</div>
<div style="position:absolute;left:1120.7px;top:1232px;width:16px;height:16px;border-radius:50%;background:#fff;"></div>
<div style="position:absolute;left:1144.50px;top:1228.61px;font-size:23.5px;line-height:23.5px;letter-spacing:0.280px;color:#000;font-weight:normal;white-space:nowrap;">Bottom</div>
<div style="position:absolute;left:1259.3px;top:1232px;width:16px;height:16px;border-radius:50%;background:#fff;"></div>
<div style="position:absolute;left:1283.40px;top:1228.61px;font-size:23.5px;line-height:23.5px;letter-spacing:0.154px;color:#000;font-weight:normal;white-space:nowrap;">Lateral</div>
<div style="position:absolute;right:1051px;top:1321.53px;font-size:23px;line-height:23px;color:#000;font-weight:normal;white-space:nowrap;">Comments</div>
<div style="position:absolute;left:992px;top:1317px;width:363px;height:32px;background:#fff;"></div>
<div style="position:absolute;left:963px;top:1320px;width:27px;height:27px;background:#c0c0c0;box-sizing:border-box;border-top:2px solid #fff;border-left:2px solid #fff;border-bottom:2px solid #000;border-right:2px solid #000;"></div>
<svg style="position:absolute;left:970.5px;top:1329.5px" width="12" height="8"><polygon points="1,1 11,1 6,7" fill="#000"/></svg>
<div style="position:absolute;left:992px;top:1364px;width:363px;height:32px;background:#fff;"></div>
<div style="position:absolute;left:963px;top:1367px;width:27px;height:27px;background:#c0c0c0;box-sizing:border-box;border-top:2px solid #fff;border-left:2px solid #fff;border-bottom:2px solid #000;border-right:2px solid #000;"></div>
<svg style="position:absolute;left:970.5px;top:1376.5px" width="12" height="8"><polygon points="1,1 11,1 6,7" fill="#000"/></svg>
<div style="position:absolute;left:1168.50px;top:1417.61px;font-size:23.5px;line-height:23.5px;letter-spacing:0.430px;color:#000;font-weight:normal;white-space:nowrap;">Table:</div>
<div style="position:absolute;left:1249.30px;top:1417.61px;font-size:23.5px;line-height:23.5px;letter-spacing:0.554px;color:#000;font-weight:normal;white-space:nowrap;">Position</div>
<div style="position:absolute;left:1394.30px;top:1417.61px;font-size:23.5px;line-height:23.5px;letter-spacing:0.425px;color:#000;font-weight:normal;white-space:nowrap;">Height</div>
<div style="position:absolute;left:1248px;top:1451px;width:134px;height:30px;background:#fff;"></div>
<div style="position:absolute;left:1283.80px;top:1454.71px;font-size:23.5px;line-height:23.5px;letter-spacing:0.788px;color:#000;font-weight:normal;white-space:nowrap;">480.0</div>
<div style="position:absolute;left:1355px;top:1452px;width:26px;height:28px;background:#c0c0c0;box-sizing:border-box;border-top:2px solid #fff;border-left:2px solid #fff;border-bottom:2px solid #000;border-right:2px solid #000;"></div>
<svg style="position:absolute;left:1362.0px;top:1462.0px" width="12" height="8"><polygon points="1,1 11,1 6,7" fill="#000"/></svg>
<div style="position:absolute;left:1393px;top:1451px;width:91px;height:30px;background:#fff;"></div>
<div style="position:absolute;left:1418.40px;top:1454.71px;font-size:23.5px;line-height:23.5px;letter-spacing:-0.013px;color:#000;font-weight:normal;white-space:nowrap;">142.5</div>
<div style="position:absolute;left:1573px;top:1451px;width:201px;height:30px;background:#fff;"></div>
<div style="position:absolute;left:1580.20px;top:1455.11px;font-size:23.5px;line-height:23.5px;letter-spacing:0.464px;color:#000;font-weight:normal;white-space:nowrap;">Craniocaudal</div>
<div style="position:absolute;left:1746px;top:1452px;width:28px;height:28px;background:#c0c0c0;box-sizing:border-box;border-top:2px solid #fff;border-left:2px solid #fff;border-bottom:2px solid #000;border-right:2px solid #000;"></div>
<svg style="position:absolute;left:1754.0px;top:1462.0px" width="12" height="8"><polygon points="1,1 11,1 6,7" fill="#000"/></svg>
<div style="position:absolute;left:1823px;top:1442px;width:79px;height:47px;background:#c0c0c0;box-sizing:border-box;border-top:2.5px solid #fafafa;border-left:2.5px solid #fafafa;border-bottom:2.5px solid #000;border-right:2.5px solid #000;"></div>
<svg style="position:absolute;left:1840px;top:1455px" width="46" height="23"><polygon points="0,0 13,11.5 0,23" fill="#000"/><polygon points="46,0 33,11.5 46,23" fill="#000"/></svg>
<div style="position:absolute;left:1856.00px;top:1452.61px;font-size:30px;line-height:30px;letter-spacing:0.000px;color:#000;font-weight:bold;white-space:nowrap;transform:scaleY(1.08);transform-origin:0 80%;">0</div>
<div style="position:absolute;left:692px;top:1510px;width:206px;height:36px;background:#c0c0c0;"></div>
<div style="position:absolute;left:746.30px;top:1515.42px;font-size:27.5px;line-height:27.5px;letter-spacing:-0.829px;color:#fff;font-weight:bold;white-space:nowrap;">Routine</div>
<div style="position:absolute;left:901px;top:1510px;width:207px;height:36px;background:#a4a4a4;box-sizing:border-box;border-top:2px solid #f0f0f0;border-left:2px solid #f0f0f0;border-bottom:2px solid #a4a4a4;border-right:2px solid #a4a4a4;"></div>
<div style="position:absolute;left:972.00px;top:1515.42px;font-size:27.5px;line-height:27.5px;letter-spacing:-0.517px;color:#404040;font-weight:bold;white-space:nowrap;">Scan</div>
<div style="position:absolute;left:1320px;top:1510px;width:206px;height:36px;background:#a4a4a4;box-sizing:border-box;border-top:2px solid #f0f0f0;border-left:2px solid #f0f0f0;border-bottom:2px solid #a4a4a4;border-right:2px solid #a4a4a4;"></div>
<div style="position:absolute;left:1337.40px;top:1515.42px;font-size:27.5px;line-height:27.5px;letter-spacing:-0.093px;color:#404040;font-weight:bold;white-space:nowrap;">Auto Tasking</div>
<div style="position:absolute;left:1739px;top:1510px;width:205px;height:36px;background:#a4a4a4;box-sizing:border-box;border-top:2px solid #f0f0f0;border-left:2px solid #f0f0f0;border-bottom:2px solid #a4a4a4;border-right:2px solid #a4a4a4;"></div>
<div style="position:absolute;left:1794.40px;top:1515.42px;font-size:27.5px;line-height:27.5px;letter-spacing:0.225px;color:#404040;font-weight:bold;white-space:nowrap;">Trigger</div>
<div style="position:absolute;left:0px;top:1554px;width:1953px;height:4px;background:#c8c8c8;"></div>
<div style="position:absolute;left:229.89999999999998px;top:1441.5px;width:105px;height:105px;border-radius:50%;background:radial-gradient(circle at 38% 32%,#d6d6d6 0,#c8c8c8 40%,#b4b4b4 85%,#9a9a9a 100%);box-shadow:inset 2px 2px 2px rgba(255,255,255,0.7), inset -2px -3px 3px rgba(90,90,90,0.5);"></div>
<div style="position:absolute;left:342.5px;top:1441.5px;width:105px;height:105px;border-radius:50%;background:radial-gradient(circle at 38% 32%,#d6d6d6 0,#c8c8c8 40%,#b4b4b4 85%,#9a9a9a 100%);box-shadow:inset 2px 2px 2px rgba(255,255,255,0.7), inset -2px -3px 3px rgba(90,90,90,0.5);"></div>
<div style="position:absolute;left:455.5px;top:1441.5px;width:105px;height:105px;border-radius:50%;background:radial-gradient(circle at 38% 32%,#d6d6d6 0,#c8c8c8 40%,#b4b4b4 85%,#9a9a9a 100%);box-shadow:inset 2px 2px 2px rgba(255,255,255,0.7), inset -2px -3px 3px rgba(90,90,90,0.5);"></div>
<div style="position:absolute;left:254.00px;top:1480.59px;font-size:24px;line-height:24px;letter-spacing:0.342px;color:#a4a4a4;font-weight:normal;white-space:nowrap;text-shadow:-1px -1px 0 #7c7c7c, 1px 1px 0 #e4e4e4;">Load</div>
<div style="position:absolute;left:368.80px;top:1468.29px;font-size:24px;line-height:24px;letter-spacing:-0.725px;color:#a4a4a4;font-weight:normal;white-space:nowrap;text-shadow:-1px -1px 0 #7c7c7c, 1px 1px 0 #e4e4e4;">Hold</div>
<div style="position:absolute;left:360.00px;top:1494.59px;font-size:24px;line-height:24px;letter-spacing:0.156px;color:#a4a4a4;font-weight:normal;white-space:nowrap;text-shadow:-1px -1px 0 #7c7c7c, 1px 1px 0 #e4e4e4;">Recon</div>
<div style="position:absolute;left:472.00px;top:1480.19px;font-size:24px;line-height:24px;letter-spacing:0.156px;color:#a4a4a4;font-weight:normal;white-space:nowrap;text-shadow:-1px -1px 0 #7c7c7c, 1px 1px 0 #e4e4e4;">Recon</div>
<div style="position:absolute;left:707.40px;top:1568.98px;font-size:22px;line-height:22px;letter-spacing:0.401px;color:#f0f0f0;font-weight:normal;white-space:nowrap;">Send successfully completed to PACS for patient name:</div>
<svg style="position:absolute;left:1409px;top:1561px" width="36" height="36"><circle cx="18" cy="18" r="16.5" fill="#f01010" stroke="#d0d0d0" stroke-width="1.3"/><path d="M18,18 V1.5 A16.5,16.5 0 0 0 1.5,18 Z" fill="#000" stroke="#d0d0d0" stroke-width="1.3"/></svg>
<svg style="position:absolute;left:1452px;top:1560px" width="40" height="40"><rect x="17" y="1" width="20" height="20" fill="#20d020" stroke="#b0b0b0" stroke-width="1.2"/><polygon points="17.6,1.6 26,1.6 26,9 17.6,14" fill="#000"/><rect x="9" y="9" width="20" height="20" fill="#20d020" stroke="#b0b0b0" stroke-width="1.2"/><polygon points="9.6,9.6 18,9.6 18,17 9.6,22" fill="#000"/><rect x="1" y="17" width="20" height="20" fill="#20d020" stroke="#b0b0b0" stroke-width="1.2"/><polygon points="1.6,17.6 10,17.6 10,25 1.6,30" fill="#000"/></svg>
<svg style="position:absolute;left:1495px;top:1559px" width="41" height="40"><path d="M1.5,9 V30 Q20,44 38.5,30 V9" fill="none" stroke="#c8c8c8" stroke-width="1.4"/><ellipse cx="20" cy="9" rx="18.5" ry="7.5" fill="none" stroke="#c8c8c8" stroke-width="1.4"/><path d="M4,12 Q20,22 36,12" fill="none" stroke="#c8c8c8" stroke-width="1.2"/><text x="20.5" y="33" font-size="16.5" fill="#f0f0f0" text-anchor="middle" font-family="Liberation Sans">2%</text></svg>
<svg style="position:absolute;left:1541.5px;top:1559px" width="41" height="40"><path d="M1.5,9 V30 Q20,44 38.5,30 V9" fill="none" stroke="#c8c8c8" stroke-width="1.4"/><ellipse cx="20" cy="9" rx="18.5" ry="7.5" fill="none" stroke="#c8c8c8" stroke-width="1.4"/><path d="M4,12 Q20,22 36,12" fill="none" stroke="#c8c8c8" stroke-width="1.2"/><text x="20.5" y="33" font-size="16.5" fill="#f0f0f0" text-anchor="middle" font-family="Liberation Sans">6%</text></svg>
<div style="position:absolute;left:1542.5px;top:1572px;width:1.5px;height:14px;background:#20c020;"></div>
<div style="position:absolute;left:1942px;top:41px;width:54px;height:242px;background:#22225a;"></div>
<div style="position:absolute;left:1996px;top:39px;width:4px;height:247px;background:#c0c0c4;"></div>
<div style="position:absolute;left:1950px;top:283px;width:50px;height:3px;background:#c4c4c8;"></div>
<div style="position:absolute;left:1975px;top:163px;width:0;height:0;"><div style="position:absolute;left:-130px;top:-18px;width:260px;height:36px;transform:rotate(90deg);text-align:center;font-size:35.5px;line-height:36px;font-weight:bold;color:#fff;white-space:nowrap;">Examination</div></div>
<div style="position:absolute;left:1953px;top:286px;width:47px;height:254px;background:#2e2e6c;"></div>
<div style="position:absolute;left:1953px;top:286px;width:47px;height:6px;background:#000;"></div>
<div style="position:absolute;left:1977px;top:417px;width:0;height:0;"><div style="position:absolute;left:-50px;top:-18px;width:100px;height:36px;transform:rotate(90deg);text-align:center;font-size:35px;line-height:36px;font-weight:bold;color:#000;white-space:nowrap;">3D</div></div>
</body></html>
